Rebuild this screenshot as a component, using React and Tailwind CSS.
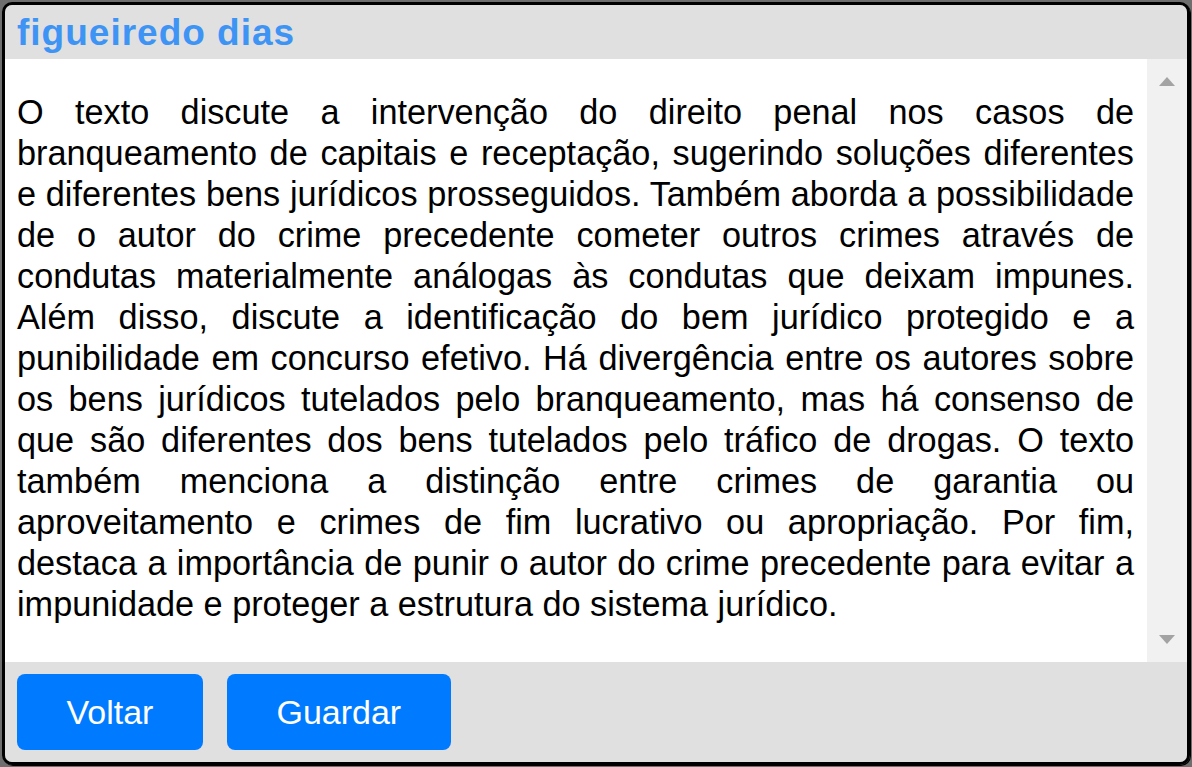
export default function App() {
    const resumo =
        "O texto discute a intervenção do direito penal nos casos de branqueamento de capitais e receptação, sugerindo soluções diferentes e diferentes bens jurídicos prosseguidos. Também aborda a possibilidade de o autor do crime precedente cometer outros crimes através de condutas materialmente análogas às condutas que deixam impunes. Além disso, discute a identificação do bem jurídico protegido e a punibilidade em concurso efetivo. Há divergência entre os autores sobre os bens jurídicos tutelados pelo branqueamento, mas há consenso de que são diferentes dos bens tutelados pelo tráfico de drogas. O texto também menciona a distinção entre crimes de garantia ou aproveitamento e crimes de fim lucrativo ou apropriação. Por fim, destaca a importância de punir o autor do crime precedente para evitar a impunidade e proteger a estrutura do sistema jurídico.";

    return (
        <div className="h-[767px] w-[1192px] bg-[#6e6e6e] p-[2px] font-['Liberation_Sans',Arial,sans-serif]">
            <div className="flex h-full flex-col overflow-hidden rounded-[10px] border-[3px] border-black shadow-[1px_1px_0_#000]">
                {/* Cabeçalho */}
                <div className="flex h-[54px] shrink-0 items-center bg-[#e0e0e0] px-[12px]">
                    <h1 className="text-[37px] font-bold leading-none tracking-[1px] text-[#3d94f5]">figueiredo dias</h1>
                </div>

                {/* Texto + barra de rolagem */}
                <div className="flex h-[603px] shrink-0 bg-white">
                    <div className="flex-1 pl-[12px] pr-[13px] pt-[33px]">
                        <p className="text-justify text-[34.25px] leading-[41px] text-black">{resumo}</p>
                    </div>
                    <div className="flex w-[40px] flex-col items-center justify-between bg-[#f1f1f1] py-[18px]">
                        <div className="h-0 w-0 border-x-[8px] border-b-[9px] border-x-transparent border-b-[#a3a3a3]" />
                        <div className="h-0 w-0 border-x-[8px] border-t-[9px] border-x-transparent border-t-[#a3a3a3]" />
                    </div>
                </div>

                {/* Botões */}
                <div className="flex flex-1 items-start gap-[24px] bg-[#e0e0e0] px-[12px] pt-[12px]">
                    <button type="button" className="h-[76px] rounded-[8px] bg-[#007bff] px-[49.5px] text-[34px] text-white">
                        Voltar
                    </button>
                    <button type="button" className="h-[76px] rounded-[8px] bg-[#007bff] px-[49.5px] text-[34px] text-white">
                        Guardar
                    </button>
                </div>
            </div>
        </div>
    );
}
